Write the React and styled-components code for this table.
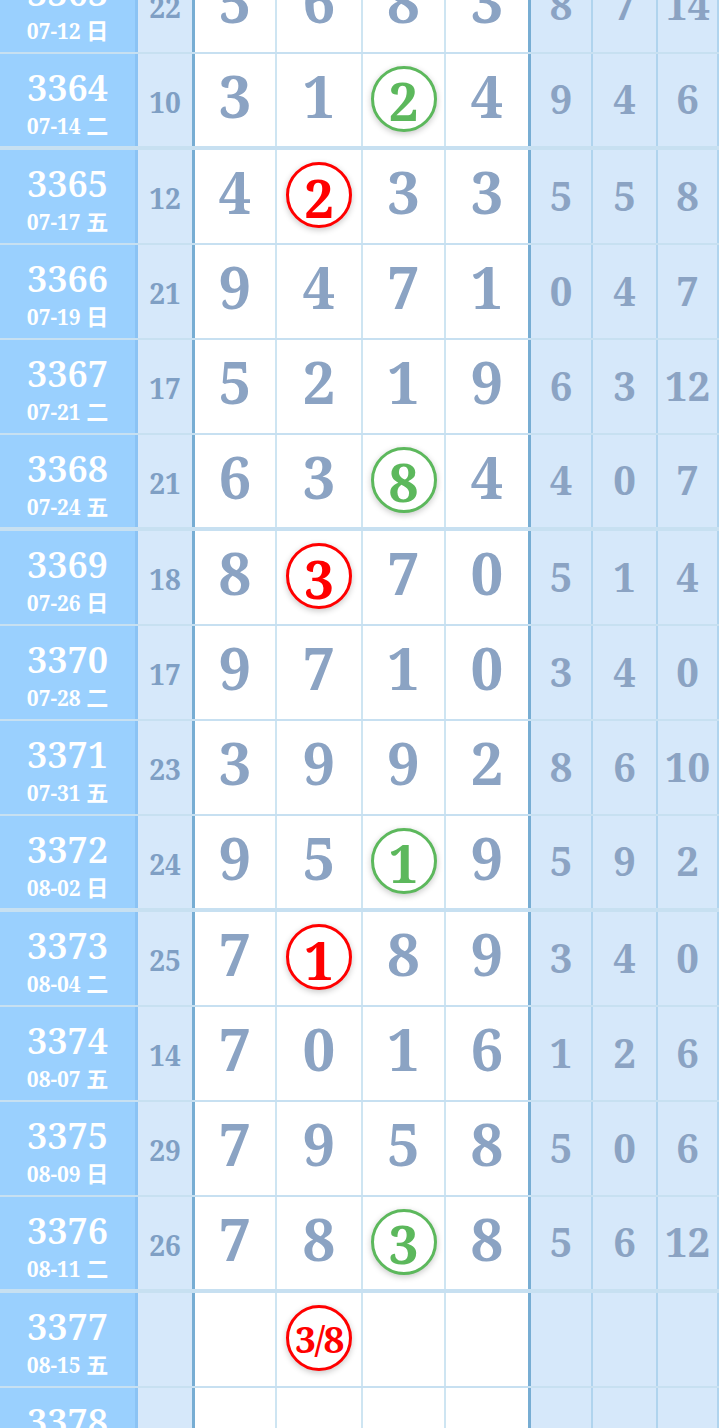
import React from "react";
import styled, { createGlobalStyle, css } from "styled-components";

const Global = createGlobalStyle`
  html, body { margin: 0; padding: 0; background: #ffffff; }
  body { overflow: hidden; }
`;

const FONT = `"Noto Serif", "DejaVu Serif Condensed", "DejaVu Serif", "Noto Sans CJK SC", serif`;

const Table = styled.div`
  width: 719px;
  margin-top: -41px;
  font-family: ${FONT};
`;

const Row = styled.div`
  display: grid;
  grid-template-columns: 138px 57px 82px 86px 83px 85px 62px 65px 61px;
  box-sizing: border-box;
  height: ${(p) => (p.$thick ? 96 : 95)}px;
  border-bottom: ${(p) => (p.$thick ? 4 : 2)}px solid rgba(80, 160, 210, 0.32);
`;

const Cell = styled.div`
  box-sizing: border-box;
  display: flex;
  align-items: center;
  justify-content: center;
  border-right: 2px solid rgba(80, 160, 210, 0.28);
  line-height: 1;
`;

const IssueCell = styled(Cell)`
  flex-direction: column;
  background: #9ad0fe;
  color: #ffffff;
  border-right: 3px solid rgba(70, 140, 200, 0.18);
  padding-top: 5px;
`;

const IssueNo = styled.div`
  font-size: 36px;
  line-height: 44px;
  font-weight: 600;
`;

const IssueDate = styled.div`
  font-size: 21px;
  line-height: 28px;
  font-weight: 700;
  span {
    font-family: "Noto Sans CJK SC", sans-serif;
    font-weight: 700;
    font-size: 22px;
  }
`;

const SumCell = styled(Cell)`
  background: #d6e8fa;
  color: #7f9fc4;
  font-size: 28px;
  font-weight: 700;
  border-right: 3px solid #77add3;
  padding-top: 3px;
`;

const MainCell = styled(Cell)`
  background: #ffffff;
  color: #8ba3c3;
  font-size: 58px;
  font-weight: 700;
  padding-bottom: ${(p) => (p.$ring ? 3 : 9)}px;
  ${(p) =>
    p.$last &&
    css`
      border-right: 3px solid #77add3;
    `}
`;

const SideCell = styled(Cell)`
  background: #d6e8fa;
  color: #8ba3c3;
  font-size: 40px;
  font-weight: 700;
  padding-bottom: 2px;
`;

const Ring = styled.div`
  box-sizing: border-box;
  width: 66px;
  height: 66px;
  border-radius: 50%;
  border: 3px solid ${(p) => (p.$red ? "#ff0000" : "#5cb85c")};
  color: ${(p) => (p.$red ? "#ff0000" : "#5cb85c")};
  background: #ffffff;
  box-shadow: 0 2px 6px rgba(0, 0, 0, 0.22);
  display: flex;
  align-items: center;
  justify-content: center;
  font-size: ${(p) => (p.$small ? 37 : 53)}px;
  font-weight: 700;
  letter-spacing: ${(p) => (p.$small ? "-1.5px" : "0")};
  padding-top: ${(p) => (p.$small ? 1 : 4)}px;
`;

const rows = [
  ["3363", "07-12", "日", "22", ["5", "6", "8", "3"], ["8", "7", "14"]],
  ["3364", "07-14", "二", "10", ["3", "1", "g2", "4"], ["9", "4", "6"]],
  ["3365", "07-17", "五", "12", ["4", "r2", "3", "3"], ["5", "5", "8"]],
  ["3366", "07-19", "日", "21", ["9", "4", "7", "1"], ["0", "4", "7"]],
  ["3367", "07-21", "二", "17", ["5", "2", "1", "9"], ["6", "3", "12"]],
  ["3368", "07-24", "五", "21", ["6", "3", "g8", "4"], ["4", "0", "7"]],
  ["3369", "07-26", "日", "18", ["8", "r3", "7", "0"], ["5", "1", "4"]],
  ["3370", "07-28", "二", "17", ["9", "7", "1", "0"], ["3", "4", "0"]],
  ["3371", "07-31", "五", "23", ["3", "9", "9", "2"], ["8", "6", "10"]],
  ["3372", "08-02", "日", "24", ["9", "5", "g1", "9"], ["5", "9", "2"]],
  ["3373", "08-04", "二", "25", ["7", "r1", "8", "9"], ["3", "4", "0"]],
  ["3374", "08-07", "五", "14", ["7", "0", "1", "6"], ["1", "2", "6"]],
  ["3375", "08-09", "日", "29", ["7", "9", "5", "8"], ["5", "0", "6"]],
  ["3376", "08-11", "二", "26", ["7", "8", "g3", "8"], ["5", "6", "12"]],
  ["3377", "08-15", "五", "", ["", "r3/8", "", ""], ["", "", ""]],
  ["3378", "08-17", "日", "", ["", "", "", ""], ["", "", ""]],
];

function Main({ v, last }) {
  if (v.startsWith("g") || v.startsWith("r")) {
    const t = v.slice(1);
    return (
      <MainCell $last={last} $ring>
        <Ring $red={v.startsWith("r")} $small={t.length > 1}>
          {t}
        </Ring>
      </MainCell>
    );
  }
  return <MainCell $last={last}>{v}</MainCell>;
}

export default function App() {
  return (
    <>
      <Global />
      <Table>
        {rows.map(([no, date, wd, sum, main, side]) => (
          <Row key={no} $thick={Number(no) % 4 === 0}>
            <IssueCell>
              <IssueNo>{no}</IssueNo>
              <IssueDate>
                {date} <span>{wd}</span>
              </IssueDate>
            </IssueCell>
            <SumCell>{sum}</SumCell>
            {main.map((v, i) => (
              <Main key={i} v={v} last={i === 3} />
            ))}
            {side.map((v, i) => (
              <SideCell key={i}>{v}</SideCell>
            ))}
          </Row>
        ))}
      </Table>
    </>
  );
}
